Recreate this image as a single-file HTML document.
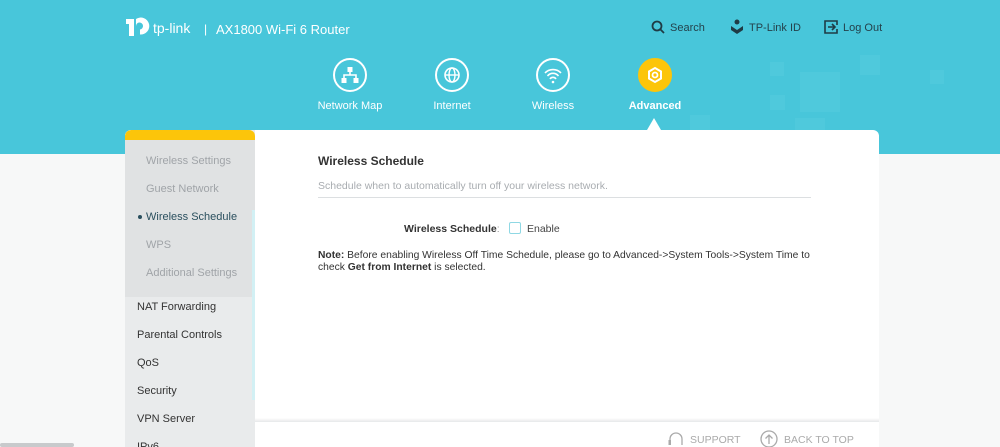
<!DOCTYPE html>
<html><head><style>
*{margin:0;padding:0;box-sizing:border-box}
body{width:1000px;height:447px;overflow:hidden;background:#f7f8f8;font-family:"Liberation Sans",sans-serif;position:relative}
.hdr{position:absolute;left:0;top:0;width:1000px;height:154px;background:#48c6da;overflow:hidden}
.sq{position:absolute;background:#4fc9dc}
.t{position:absolute;white-space:nowrap}
.nav{position:absolute;top:58px;width:34px;height:34px;border:2px solid #fff;border-radius:50%}
.navl{position:absolute;top:100px;color:#fff;font-size:11px;text-align:center;width:100px}
.panel{position:absolute;left:125px;top:130px;width:754px;height:317px;background:#fff;border-radius:6px 6px 0 0;overflow:hidden}
.side{position:absolute;left:0;top:0;width:130px;height:317px;background:#e9ebec}
.sub{position:absolute;left:0;top:0;width:130px;height:167px;background:#e0e2e3}
.si{position:absolute;left:21px;font-size:11px;color:#a0a4a8}
.mi{position:absolute;left:12px;font-size:11px;color:#333}
</style></head><body>
<div class="hdr">
<div class="sq" style="left:770px;top:62px;width:14px;height:14px"></div>
<div class="sq" style="left:800px;top:72px;width:40px;height:40px"></div>
<div class="sq" style="left:860px;top:55px;width:20px;height:20px"></div>
<div class="sq" style="left:795px;top:118px;width:30px;height:30px"></div>
<div class="sq" style="left:930px;top:70px;width:14px;height:14px"></div>
<div class="sq" style="left:690px;top:115px;width:20px;height:20px"></div>
<div class="sq" style="left:770px;top:95px;width:15px;height:15px"></div>
<svg style="position:absolute;left:124px;top:13px" width="30" height="28" viewBox="0 0 30 28"><path d="M2 6h8v17h-5v-12h-3z M12 6a8.5 8.5 0 1 1 4 15.5v-5a3.5 3.5 0 1 0-4-3.5z" fill="#fff"/></svg>
<div class="t" style="left:153px;top:20px;color:#fff;font-size:14px">tp-link</div>
<div class="t" style="left:204px;top:22px;color:#fff;font-size:12px">|</div>
<div class="t" style="left:216px;top:22px;color:#fff;font-size:13px">AX1800 Wi-Fi 6 Router</div>
<svg style="position:absolute;left:651px;top:20px" width="14" height="14"><circle cx="6" cy="6" r="4.5" stroke="#1f3b45" stroke-width="1.8" fill="none"/><path d="M9 9l4 4" stroke="#1f3b45" stroke-width="1.8"/></svg>
<div class="t" style="left:670px;top:22px;color:#24424c;font-size:11px">Search</div>
<svg style="position:absolute;left:730px;top:19px" width="14" height="16"><circle cx="7" cy="3" r="2.5" fill="#1f3b45"/><path d="M1 7l6 4 6-4v4l-6 4-6-4z" fill="#1f3b45"/></svg>
<div class="t" style="left:749px;top:22px;color:#24424c;font-size:11px">TP-Link ID</div>
<svg style="position:absolute;left:824px;top:20px" width="14" height="14"><path d="M6 1H1v12h12V9 M13 5V1H6" stroke="#1f3b45" stroke-width="1.6" fill="none"/><path d="M4 7h7M8 4l3 3-3 3" stroke="#1f3b45" stroke-width="1.6" fill="none"/></svg>
<div class="t" style="left:843px;top:22px;color:#24424c;font-size:11px">Log Out</div>
<div class="nav" style="left:333px"><svg width="30" height="30"><path d="M15 8v5M9 19v-4h12v4M15 13v2" stroke="#fff" stroke-width="1.6" fill="none"/><rect x="12.5" y="7" width="5" height="5" fill="#fff"/><rect x="6.5" y="18" width="5" height="5" fill="#fff"/><rect x="18.5" y="18" width="5" height="5" fill="#fff"/></svg></div>
<div class="navl" style="left:300px">Network Map</div>
<div class="nav" style="left:435px"><svg width="30" height="30"><circle cx="15" cy="15" r="7" stroke="#fff" stroke-width="1.6" fill="none"/><ellipse cx="15" cy="15" rx="3" ry="7" stroke="#fff" stroke-width="1.4" fill="none"/><path d="M8 15h14" stroke="#fff" stroke-width="1.4"/></svg></div>
<div class="navl" style="left:402px">Internet</div>
<div class="nav" style="left:536px"><svg width="30" height="30"><path d="M7 13a11 11 0 0 1 16 0M9.5 16a7 7 0 0 1 11 0M12 19a3.5 3.5 0 0 1 6 0" stroke="#fff" stroke-width="1.6" fill="none"/><circle cx="15" cy="22" r="1.3" fill="#fff"/></svg></div>
<div class="navl" style="left:503px">Wireless</div>
<div class="nav" style="left:638px;background:#fcc50a;border-color:#fcc50a"><svg width="30" height="30"><path d="M15 8l6 3.5v7L15 22l-6-3.5v-7z" stroke="#fff" stroke-width="2" fill="none"/><circle cx="15" cy="15" r="2.5" stroke="#fff" stroke-width="1.8" fill="none"/></svg></div>
<div class="navl" style="left:605px;font-weight:bold">Advanced</div>
<div style="position:absolute;left:647px;top:118px;border:7px solid transparent;border-bottom:12px solid #fff;border-top:0"></div>
</div>
<div class="panel">
<div class="side">
<div style="position:absolute;left:0;top:0;width:130px;height:10px;background:#fcc50a;border-radius:6px 6px 0 0"></div>
<div class="sub" style="top:10px;height:157px"></div>
<div style="position:absolute;left:127px;top:80px;width:3px;height:190px;background:#d2f0f4"></div>
<div class="si" style="top:25px">Wireless Settings</div>
<div class="si" style="top:53px">Guest Network</div>
<div class="si" style="top:81px;color:#2a4f5e">Wireless Schedule</div>
<div style="position:absolute;left:13px;top:85px;width:4px;height:4px;border-radius:50%;background:#2a4f5e"></div>
<div class="si" style="top:109px">WPS</div>
<div class="si" style="top:137px">Additional Settings</div>
<div class="mi" style="top:171px">NAT Forwarding</div>
<div class="mi" style="top:199px">Parental Controls</div>
<div class="mi" style="top:227px">QoS</div>
<div class="mi" style="top:255px">Security</div>
<div class="mi" style="top:283px">VPN Server</div>
<div class="mi" style="top:311px">IPv6</div>
</div>
<div class="t" style="left:193px;top:24px;font-size:12px;font-weight:bold;color:#333">Wireless Schedule</div>
<div class="t" style="left:193px;top:50px;font-size:10.5px;color:#a8acb0">Schedule when to automatically turn off your wireless network.</div>
<div style="position:absolute;left:193px;top:67px;width:493px;height:1px;background:#dcdfe1"></div>
<div class="t" style="left:279px;top:93px;font-size:10.5px;font-weight:bold;color:#333">Wireless Schedule<span style="font-weight:normal;color:#999">:</span></div>
<div style="position:absolute;left:384px;top:92px;width:12px;height:12px;border:1.5px solid #8fd8e4;border-radius:2px"></div>
<div class="t" style="left:402px;top:93px;font-size:10.5px;color:#444">Enable</div>
<div class="t" style="left:193px;top:120px;font-size:10.3px;color:#333;line-height:12px"><b>Note:</b> Before enabling Wireless Off Time Schedule, please go to Advanced-&gt;System Tools-&gt;System Time to<br>check <b>Get from Internet</b> is selected.</div>
<div style="position:absolute;left:130px;top:288px;width:624px;height:4px;background:linear-gradient(#fff,#e6e8e9)"></div>
<svg style="position:absolute;left:542px;top:301px" width="18" height="16"><path d="M3 12V8a6 6 0 0 1 12 0v6" stroke="#aaa" stroke-width="1.3" fill="none"/><rect x="1.5" y="9" width="2.5" height="5" fill="#aaa"/></svg>
<div class="t" style="left:565px;top:304px;font-size:10.5px;color:#aaa">SUPPORT</div>
<svg style="position:absolute;left:635px;top:300px" width="18" height="18"><circle cx="9" cy="9" r="8" stroke="#aaa" stroke-width="1.3" fill="none"/><path d="M9 14V5M5.5 8.5L9 5l3.5 3.5" stroke="#aaa" stroke-width="1.3" fill="none"/></svg>
<div class="t" style="left:659px;top:304px;font-size:10.5px;color:#aaa">BACK TO TOP</div>
</div>
<div style="position:absolute;left:0;top:443px;width:74px;height:4px;background:#c8cacc;border-radius:2px"></div>
</body></html>
